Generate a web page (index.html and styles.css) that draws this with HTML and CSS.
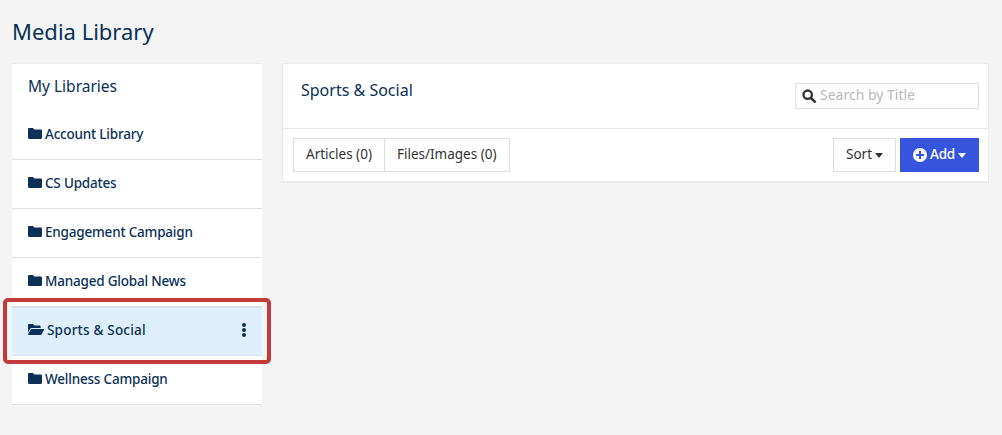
FILE: index.html
```html
<!DOCTYPE html>
<html lang="en">
<head>
    <meta charset="UTF-8">
    <title>Media Library</title>
    <link rel="stylesheet" href="styles.css">
</head>
<body>
    <h1 class="page-title">Media Library</h1>
    <div class="layout">
        <div class="sidebar">
            <h2 class="sidebar-title">My Libraries</h2>
            <ul class="library-list">
                <li class="library-item">
                    <svg class="folder" viewBox="0 0 14 11"><path d="M1.2 0H5l1.4 1.6h6.4c.7 0 1.2.5 1.2 1.2v7c0 .7-.5 1.2-1.2 1.2H1.2C.5 11 0 10.500 0 9.800V1.200C0 .5.500 0 1.200 0z"/></svg>
                    Account Library
                </li>
                <li class="library-item">
                    <svg class="folder" viewBox="0 0 14 11"><path d="M1.2 0H5l1.4 1.6h6.4c.7 0 1.2.5 1.2 1.2v7c0 .7-.5 1.2-1.2 1.2H1.2C.5 11 0 10.500 0 9.800V1.200C0 .5.500 0 1.200 0z"/></svg>
                    CS Updates
                </li>
                <li class="library-item">
                    <svg class="folder" viewBox="0 0 14 11"><path d="M1.2 0H5l1.4 1.6h6.4c.7 0 1.2.5 1.2 1.2v7c0 .7-.5 1.2-1.2 1.2H1.2C.5 11 0 10.500 0 9.800V1.200C0 .5.500 0 1.200 0z"/></svg>
                    Engagement Campaign
                </li>
                <li class="library-item">
                    <svg class="folder" viewBox="0 0 14 11"><path d="M1.2 0H5l1.4 1.6h6.4c.7 0 1.2.5 1.2 1.2v7c0 .7-.5 1.2-1.2 1.2H1.2C.5 11 0 10.500 0 9.800V1.200C0 .5.500 0 1.200 0z"/></svg>
                    Managed Global News
                </li>
                <li class="library-item active">
                    <svg class="folder-open" viewBox="0 0 16 11"><path d="M0 1.200C0 .5.500 0 1.200 0H5l1.400 1.500h5c.7 0 1.200.5 1.200 1.200V4H3.600c-.6 0-1.100.3-1.400.8L0 8.600z"/><path d="M3.800 5h11.400c.6 0 1 .6.700 1.100l-2.300 4.200c-.2.400-.6.700-1.100.7H.9c-.6 0-1-.6-.7-1.100l2.500-4.300c.2-.4.600-.6 1.100-.6z"/></svg>
                    <span class="item-name">Sports &amp; Social</span>
                    <span class="kebab"><i></i><i></i><i></i></span>
                    <div class="highlight"></div>
                </li>
                <li class="library-item">
                    <svg class="folder" viewBox="0 0 14 11"><path d="M1.2 0H5l1.4 1.6h6.4c.7 0 1.2.5 1.2 1.2v7c0 .7-.5 1.2-1.2 1.2H1.2C.5 11 0 10.500 0 9.800V1.200C0 .5.500 0 1.200 0z"/></svg>
                    Wellness Campaign
                </li>
            </ul>
        </div>
        <div class="panel">
            <div class="panel-head">
                <h2 class="panel-title">Sports &amp; Social</h2>
                <label class="search">
                    <svg class="search-icon" viewBox="0 0 14 14"><circle cx="5.700" cy="5.700" r="4.200" fill="none" stroke="#333" stroke-width="2.300"/><path d="M8.900 8.900l3.800 3.800" stroke="#333" stroke-width="2.600" stroke-linecap="round"/></svg>
                    <input type="text" placeholder="Search by Title">
                </label>
            </div>
            <div class="panel-bar">
                <div class="tabs">
                    <button class="tab">Articles (0)</button>
                    <button class="tab">Files/Images (0)</button>
                </div>
                <div class="actions">
                    <button class="btn-sort">Sort <span class="caret"></span></button>
                    <button class="btn-add">
                        <svg class="plus" viewBox="0 0 14 14"><path fill-rule="evenodd" d="M7 0a7 7 0 1 1 0 14A7 7 0 0 1 7 0zM6 3v3H3v2h3v3h2V8h3V6H8V3z"/></svg>
                        Add <span class="caret"></span>
                    </button>
                </div>
            </div>
        </div>
    </div>
</body>
</html>
```

FILE: styles.css
```css
* {
    box-sizing: border-box;
}
body {
    margin: 0;
    height: 435px;
    overflow: hidden;
    background: #f4f4f4;
    font-family: "Noto Sans", "Open Sans", sans-serif;
    font-size: 14px;
    color: #333;
}
.page-title {
    margin: 0;
    padding: 15px 12px 0;
    height: 63px;
    font-size: 22px;
    line-height: 32px;
    font-weight: 400;
    color: #0b3157;
}
.layout {
    display: flex;
    align-items: flex-start;
    gap: 20px;
    padding-left: 12px;
}
.sidebar {
    width: 250px;
    background: #fff;
    border-top: 1px solid #eaeaea;
}
.sidebar-title {
    margin: 0;
    padding: 11px 16px 0;
    height: 46px;
    font-size: 15.500px;
    line-height: 22px;
    font-weight: 400;
    color: #0b3157;
}
.library-list {
    margin: 0;
    padding: 0;
    list-style: none;
}
.library-item {
    position: relative;
    display: flex;
    align-items: center;
    gap: 3px;
    height: 49px;
    padding: 0 16px 3px;
    font-size: 13.500px;
    letter-spacing: -0.2px;
    font-weight: 500;
    color: #0b3157;
    border-bottom: 1px solid #dfdfe3;
}
.library-item:first-child {
    height: 50px;
    padding-bottom: 2px;
}
.folder {
    width: 14px;
    height: 11px;
    fill: #0b3157;
}
.folder-open {
    width: 16px;
    height: 11px;
    fill: #0b3157;
}
.active {
    padding-bottom: 4px;
    background: #deeefa;
    border-top: 1px solid #d3e2ee;
    border-bottom-color: #d3e2ee;
}
.item-name {
    flex: 1;
    letter-spacing: 0.2px;
}
.kebab {
    display: flex;
    flex-direction: column;
    gap: 1px;
}
.kebab i {
    width: 4px;
    height: 4px;
    border-radius: 50%;
    background: #0b3157;
}
.highlight {
    position: absolute;
    left: -9px;
    top: -10px;
    width: 268px;
    height: 66px;
    border: 4px solid #c23a3c;
    border-radius: 5px;
}
.panel {
    width: 707px;
    background: #fff;
    border: 1px solid #eaeaea;
    border-bottom-width: 2px;
}
.panel-head {
    display: flex;
    justify-content: space-between;
    height: 65px;
    border-bottom: 1px solid #e6e6e6;
}
.panel-title {
    margin: 0;
    padding: 14px 18px 0;
    font-size: 16px;
    line-height: 24px;
    font-weight: 400;
    color: #0b3157;
}
.search {
    display: flex;
    align-items: center;
    gap: 4px;
    width: 184px;
    height: 26px;
    margin: 19px 9px 0 0;
    padding-left: 6px;
    border: 1px solid #e2e2e2;
}
.search-icon {
    flex: none;
    width: 14px;
    height: 14px;
}
.search input {
    width: 150px;
    padding: 0 0 3px;
    border: none;
    outline: none;
    font-family: inherit;
    font-size: 14px;
}
.search input::placeholder {
    color: #b8b8b8;
}
.panel-bar {
    display: flex;
    justify-content: space-between;
    padding: 9px 9px 9px 10px;
    height: 52px;
}
.tabs {
    display: flex;
}
.tab {
    height: 34px;
    padding: 0 12px 3px;
    background: #fff;
    border: 1px solid #dedede;
    font-family: inherit;
    font-size: 13.500px;
    color: #333;
}
.tab + .tab {
    border-left: none;
}
.actions {
    display: flex;
    gap: 4px;
}
.btn-sort, .btn-add {
    display: flex;
    align-items: center;
    gap: 3px;
    height: 34px;
    padding: 0 12px 3px;
    font-family: inherit;
    font-size: 13.500px;
}
.btn-sort {
    background: #fff;
    border: 1px solid #dedede;
    color: #333;
}
.btn-add {
    background: #3655dc;
    border: 1px solid #3655dc;
    color: #fff;
    font-weight: 500;
    letter-spacing: -0.2px;
}
.plus {
    width: 14px;
    height: 14px;
    fill: #fff;
    margin-top: 3px;
}
.caret {
    width: 0;
    height: 0;
    margin-top: 3px;
    border-top: 5px solid currentColor;
    border-left: 4.500px solid transparent;
    border-right: 4.500px solid transparent;
}
```
